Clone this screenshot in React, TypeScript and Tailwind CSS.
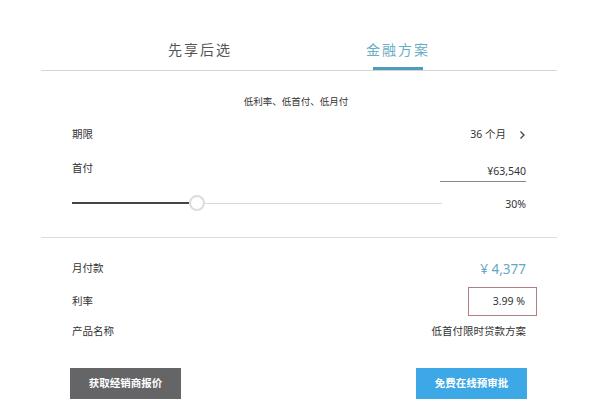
import React from 'react';

const font = { fontFamily: "'Noto Sans', 'Noto Sans CJK SC', sans-serif" };

const tabs = [
  { label: '先享后选', active: false },
  { label: '金融方案', active: true },
];

const Chevron = () => (
  <svg width="7" height="10" viewBox="0 0 7 10" className="ml-[13px]">
    <polyline points="1.5,1.5 5,5 1.5,8.5" fill="none" stroke="#444" strokeWidth="1.3" />
  </svg>
);

export default function App() {
  return (
    <div className="w-[600px] h-[419px] bg-white text-[#333] overflow-hidden" style={font}>
      <div className="ml-[41px] w-[516px]">
        {/* tabs */}
        <div className="flex justify-center border-b border-[#d4d4d4] pt-[40px]">
          {tabs.map((t) => (
            <div key={t.label} className="w-[198px] flex flex-col items-center">
              <span
                className={`h-[20px] leading-[20px] text-[14px] tracking-[2px] ${
                  t.active ? 'text-[#6aaec6]' : 'text-[#555]'
                }`}
              >
                {t.label}
              </span>
              <div className={`mt-[7px] h-[3px] w-[50px] ${t.active ? 'bg-[#4f9bb8]' : 'bg-transparent'}`} />
            </div>
          ))}
        </div>

        <p className="mt-[25px] text-center text-[9.5px] leading-[12px] text-[#333] pr-[6px]">低利率、低首付、低月付</p>

        {/* term + down payment */}
        <div className="px-[31px]">
          <div className="mt-[17px] h-[20px] flex items-center justify-between text-[10.5px]">
            <span>期限</span>
            <span className="flex items-center">
              36 个月
              <Chevron />
            </span>
          </div>
          <div className="mt-[13px] flex items-start justify-between text-[10.5px]">
            <span className="leading-[20px]">首付</span>
            <span className="w-[86px] pt-[3px] leading-[20px] text-right border-b border-[#888]">¥63,540</span>
          </div>
          <div className="mt-[13px] h-[16px] flex items-center justify-between">
            <div className="w-[370px] flex items-center">
              <div className="w-[117px] h-[2px] bg-[#444]" />
              <div className="w-[16px] h-[16px] rounded-full border-2 border-[#dcdcdc] bg-white shrink-0" />
              <div className="flex-1 h-px bg-[#d8d8d8]" />
            </div>
            <span className="text-[10.5px] mt-[4px]">30%</span>
          </div>
        </div>

        <div className="mt-[26px] border-t border-[#dedede]" />

        {/* result */}
        <div className="px-[31px] text-[10.5px]">
          <div className="mt-[21px] h-[20px] flex items-center justify-between">
            <span>月付款</span>
            <span className="text-[13.5px] text-[#62aac2]">¥ 4,377</span>
          </div>
          <div className="mt-[8px] h-[29px] flex items-center justify-between">
            <span>利率</span>
            <span className="w-[69px] h-[29px] mr-[-11px] border border-[#b07f80] flex items-center justify-end pr-[11px]">
              3.99 %
            </span>
          </div>
          <div className="mt-[6px] h-[20px] flex items-center justify-between">
            <span>产品名称</span>
            <span>低首付限时贷款方案</span>
          </div>
          <div className="mt-[26px] flex justify-between">
            <button className="ml-[-2px] w-[111px] h-[31px] bg-[#656466] text-white text-[10.5px] font-semibold">
              获取经销商报价
            </button>
            <button className="mr-[-1px] w-[111px] h-[31px] bg-[#3ca8e6] text-white text-[10.5px] font-semibold">
              免费在线预审批
            </button>
          </div>
        </div>
      </div>
    </div>
  );
}
